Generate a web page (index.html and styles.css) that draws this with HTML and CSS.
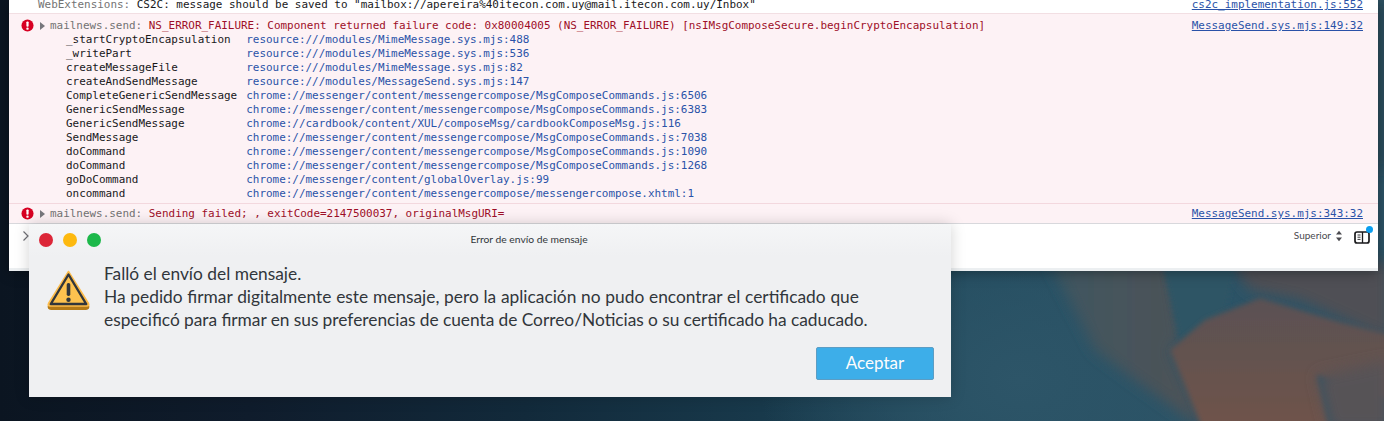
FILE: index.html
```html
<!DOCTYPE html>
<html lang="es">
<head>
<meta charset="utf-8">
<title>Error de envío de mensaje</title>
<link rel="stylesheet" href="styles.css">
</head>
<body>
<div class="desktop">
  <svg class="wallpaper" viewBox="0 0 1384 421" preserveAspectRatio="none" aria-hidden="true">
    <defs>
      <filter id="soft" x="-20%" y="-20%" width="140%" height="140%"><feGaussianBlur stdDeviation="7"/></filter>
      <filter id="edge" x="-20%" y="-20%" width="140%" height="140%"><feGaussianBlur stdDeviation="2.500"/></filter>
      <linearGradient id="rust" x1="0" y1="0" x2="0" y2="1"><stop offset="0" stop-color="#5a5153"/><stop offset=".5" stop-color="#65524f"/><stop offset="1" stop-color="#70534a"/></linearGradient>
      <linearGradient id="slate" x1="0" y1="0" x2="1" y2="0"><stop offset="0" stop-color="#3f5660"/><stop offset="1" stop-color="#4f5156"/></linearGradient>
    </defs>
    <polygon points="1050,262 1170,262 1180,340 1170,350 1205,430 1135,380 1095,350" fill="url(#slate)" filter="url(#soft)"/>
    <polygon points="1230,262 1390,262 1390,340 1300,300 1250,290" fill="#504f54" filter="url(#soft)"/>
    <polygon points="1162,262 1236,262 1226,310 1190,340 1180,340" fill="#2f5565" filter="url(#edge)"/>
    <polygon points="1170,350 1205,320 1260,298 1300,310 1340,322 1390,335 1390,400 1317,375 1330,430 1203,430" fill="url(#rust)" filter="url(#edge)"/>
    <polygon points="1317,375 1390,360 1390,430 1330,430" fill="#575256" filter="url(#soft)"/>
    <rect x="1376" y="0" width="10" height="170" fill="#2c4652" filter="url(#soft)"/>
  </svg>

  <section class="console">
    <div class="row row-top">
      <span class="mono"><span class="prefix">WebExtensions:</span> CS2C: message should be saved to "mailbox://apereira%40itecon.com.uy@mail.itecon.com.uy/Inbox"</span>
      <a class="loc mono">cs2c_implementation.js:552</a>
    </div>

    <div class="row row-error row-stack">
      <div class="msg-head">
        <svg class="err-icon" viewBox="0 0 14 14" aria-hidden="true"><circle cx="7" cy="7" r="6.500" fill="#d70022"/><rect x="5.800" y="2.600" width="2.400" height="5.800" rx="1" fill="#fff"/><circle cx="7" cy="10.400" r="1.300" fill="#fff"/></svg>
        <span class="arrow"></span>
        <span class="mono err-text"><span class="prefix">mailnews.send:</span> NS_ERROR_FAILURE: Component returned failure code: 0x80004005 (NS_ERROR_FAILURE) [nsIMsgComposeSecure.beginCryptoEncapsulation]</span>
        <a class="loc mono">MessageSend.sys.mjs:149:32</a>
      </div>
      <div class="stack mono">
        <span>_startCryptoEncapsulation</span><a>resource:///modules/MimeMessage.sys.mjs:488</a>
        <span>_writePart</span><a>resource:///modules/MimeMessage.sys.mjs:536</a>
        <span>createMessageFile</span><a>resource:///modules/MimeMessage.sys.mjs:82</a>
        <span>createAndSendMessage</span><a>resource:///modules/MessageSend.sys.mjs:147</a>
        <span>CompleteGenericSendMessage</span><a>chrome://messenger/content/messengercompose/MsgComposeCommands.js:6506</a>
        <span>GenericSendMessage</span><a>chrome://messenger/content/messengercompose/MsgComposeCommands.js:6383</a>
        <span>GenericSendMessage</span><a>chrome://cardbook/content/XUL/composeMsg/cardbookComposeMsg.js:116</a>
        <span>SendMessage</span><a>chrome://messenger/content/messengercompose/MsgComposeCommands.js:7038</a>
        <span>doCommand</span><a>chrome://messenger/content/messengercompose/MsgComposeCommands.js:1090</a>
        <span>doCommand</span><a>chrome://messenger/content/messengercompose/MsgComposeCommands.js:1268</a>
        <span>goDoCommand</span><a>chrome://messenger/content/globalOverlay.js:99</a>
        <span>oncommand</span><a>chrome://messenger/content/messengercompose/messengercompose.xhtml:1</a>
      </div>
    </div>

    <div class="row row-error row-single">
      <div class="msg-head">
        <svg class="err-icon" viewBox="0 0 14 14" aria-hidden="true"><circle cx="7" cy="7" r="6.500" fill="#d70022"/><rect x="5.800" y="2.600" width="2.400" height="5.800" rx="1" fill="#fff"/><circle cx="7" cy="10.400" r="1.300" fill="#fff"/></svg>
        <span class="arrow"></span>
        <span class="mono err-text"><span class="prefix">mailnews.send:</span> Sending failed; , exitCode=2147500037, originalMsgURI=</span>
        <a class="loc mono">MessageSend.sys.mjs:343:32</a>
      </div>
    </div>

    <div class="console-input">
      <svg class="prompt" viewBox="0 0 8 12" aria-hidden="true"><path d="M1.500 1.500 6 6l-4.500 4.500" fill="none" stroke="#6f6f75" stroke-width="1.200"/></svg>
      <span class="order">Superior</span>
      <svg class="updown" viewBox="0 0 8 12" aria-hidden="true"><path d="M4 .8 7 4.500H1zM4 11.200 1 7.500h6z" fill="#4a4a4f"/></svg>
      <span class="sidebar-toggle">
        <svg viewBox="0 0 16 13" aria-hidden="true"><rect x="1" y="1" width="14" height="11" rx="2" fill="none" stroke="#1a1a1c" stroke-width="1.700"/><path d="M8.500 1v11" stroke="#1a1a1c" stroke-width="1.300"/><path d="M3.500 4h3M3.500 6.200h3M3.500 8.400h3" stroke="#1a1a1c" stroke-width=".9"/></svg>
        <span class="dot"></span>
      </span>
    </div>
  </section>

  <section class="dialog" role="alertdialog">
    <header class="titlebar">
      <span class="lights"><i class="light red"></i><i class="light amber"></i><i class="light green"></i></span>
      <span class="title">Error de envío de mensaje</span>
    </header>
    <div class="body">
      <svg class="warn" viewBox="0 0 44 40" aria-hidden="true">
        <path d="M21.500 3 2 34.500c-1 2 0 3.500 2 3.500h35c2 0 3-1.500 2-3.500z" fill="#b47a17" stroke="#b47a17" stroke-width="2" stroke-linejoin="round" transform="translate(0 1)"/>
        <path d="M21.500 1.500 1.500 33.500c-.8 1.500 0 2.500 1.500 2.500h37c1.500 0 2.300-1 1.500-2.500z" fill="#fdbc4b" stroke="#fdbc4b" stroke-width="1.500" stroke-linejoin="round"/>
        <path d="M21.500 4.500 3.800 34h35.400z" fill="#fdc24f" stroke="#31363b" stroke-width="2.400" stroke-linejoin="round"/>
        <rect x="19.700" y="13" width="3.600" height="13" rx="1.700" fill="#31363b"/>
        <circle cx="21.500" cy="29.700" r="2.200" fill="#31363b"/>
      </svg>
      <div class="text">
        <p class="line">Falló el envío del mensaje.</p>
        <p class="line line-wide">Ha pedido firmar digitalmente este mensaje, pero la aplicación no pudo encontrar el certificado que</p>
        <p class="line line-tight">especificó para firmar en sus preferencias de cuenta de Correo/Noticias o su certificado ha caducado.</p>
      </div>
    </div>
    <footer class="actions"><button class="accept" type="button">Aceptar</button></footer>
  </section>
</div>
</body>
</html>
```
FILE: styles.css
```css
* { box-sizing: border-box; }
html, body { margin: 0; padding: 0; height: 100%; overflow: hidden; }

.desktop {
  position: relative;
  width: 1384px;
  height: 421px;
  overflow: hidden;
  background:
    radial-gradient(ellipse 260px 190px at 1020px 380px, #2d5568 0%, rgba(45,85,104,0) 100%),
    linear-gradient(90deg, #0b1521 0%, #0f1c2c 18%, #122a3b 38%, #18394b 55%, #234c5f 70%, #2c5366 85%, #2c5366 100%);
}
.wallpaper { position: absolute; inset: 0; width: 100%; height: 100%; }

.mono { font-family: "DejaVu Sans Mono", monospace; font-size: 10.950px; line-height: 14px; white-space: pre; }

.console {
  position: absolute;
  left: 9px;
  top: 0;
  width: 1369px;
  height: 271px;
  background: #fff;
  border-bottom: 3px solid #eceff1;
  box-shadow: 0 2px 12px rgba(0, 0, 0, .35);
  display: flex;
  flex-direction: column;
  color: #18181a;
}
.row { border-bottom: 1px solid #e8dfe3; flex: none; }
.row-top {
  height: 14px;
  display: flex;
  justify-content: space-between;
  align-items: flex-end;
  padding: 0 15px 1px 29px;
  overflow: hidden;
  background: #fff;
  border-bottom-color: #f2dfe3;
}
.row-error { background: #fdf2f5; border-bottom-color: #f3d8de; }
.row-stack { height: 190px; padding-top: 5px; }
.row-single { height: 20px; padding-top: 3px; border-bottom-color: #d8d8dc; }
.prefix { color: #737373; }
.loc { color: #2a52a8; text-decoration: underline; }

.msg-head { display: flex; align-items: center; height: 14px; padding: 0 15px 0 12px; }
.err-icon { width: 13px; height: 13px; flex: none; margin-top: -1px; }
.arrow {
  flex: none;
  margin: 0 5px 0 6px;
  width: 0;
  height: 0;
  border-left: 5px solid #77777c;
  border-top: 4px solid transparent;
  border-bottom: 4px solid transparent;
}
.err-text { flex: 1; color: #9e0f28; }

.stack {
  display: grid;
  grid-template-columns: max-content 1fr;
  column-gap: 9px;
  padding: 0 0 0 57px;
}
.stack a { color: #2a52a8; }

.console-input { flex: 1; display: flex; align-items: flex-start; padding: 5px 8px 0 13px; }
.prompt { width: 8px; height: 12px; margin-top: 1px; flex: none; }
.order { margin-left: auto; font: 10px/13px "Lato", sans-serif; color: #4a4a4f; }
.updown { width: 8px; height: 12px; margin: 1px 0 0 4px; flex: none; }
.sidebar-toggle { position: relative; width: 16px; height: 13px; margin: 2px 0 0 11px; flex: none; }
.sidebar-toggle svg { display: block; width: 16px; height: 13px; }
.dot { position: absolute; right: -3px; top: -5px; width: 7px; height: 7px; border-radius: 50%; background: #0a9eef; }

.dialog {
  position: absolute;
  left: 29px;
  top: 224px;
  width: 922px;
  height: 173px;
  background: linear-gradient(180deg, #f5f6f7 0, #eff0f2 32px);
  box-shadow: 0 0 14px rgba(0, 0, 0, .18);
  display: flex;
  flex-direction: column;
  color: #31363b;
  font-family: "Lato", sans-serif;
}
.titlebar { position: relative; height: 32px; display: flex; align-items: center; justify-content: center; padding: 0 0 2px 78px; flex: none; }
.lights { position: absolute; left: 10px; top: 9px; display: flex; gap: 10px; }
.light { display: block; width: 14px; height: 14px; border-radius: 50%; }
.red { background: #dc2638; }
.amber { background: #fdb90f; }
.green { background: #1cb84a; }
.title { font-size: 10.300px; line-height: 14px; color: #31363b; }

.body { display: flex; padding: 6px 0 0 18px; flex: none; }
.warn { width: 44px; height: 40px; margin-top: 8px; flex: none; }
.text { margin: 0 0 0 13px; font-size: 17.330px; line-height: 23px; white-space: nowrap; }
.line { margin: 0; }
.line-wide { word-spacing: .33px; }
.line-tight { word-spacing: -.2px; }

.actions { display: flex; justify-content: flex-end; padding: 16px 17px 0 0; }
.accept {
  width: 118px;
  height: 33px;
  padding: 0 0 3px;
  background: #3daee9;
  border: 1px solid #5c9dc4;
  border-radius: 2px;
  color: #fcfcfc;
  font: 17px/1 "Lato", sans-serif;
}
```
